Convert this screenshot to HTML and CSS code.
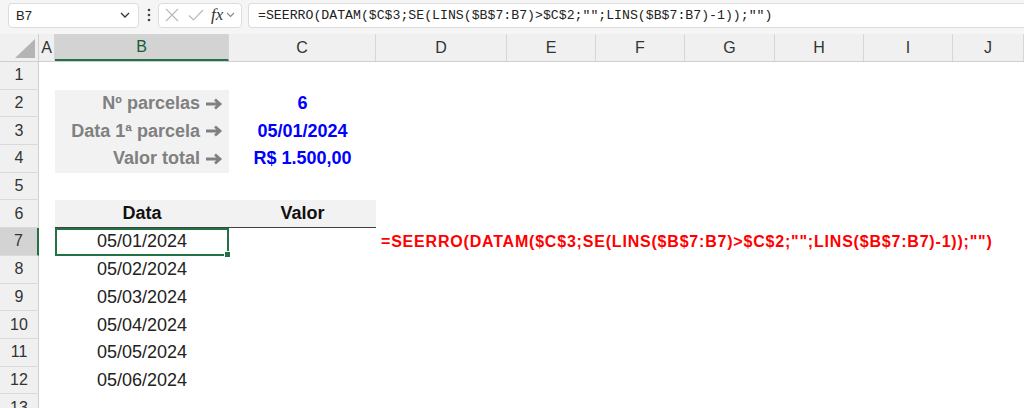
FILE: index.html
```html
<!DOCTYPE html>
<html lang="pt-BR">
  <head>
    <title>Parcelas com DATAM</title>
    <link rel="stylesheet" href="styles.css">
  </head>
  <body>
    <!-- Formula bar -->
    <div class="formula-bar">
      <div class="name-box">
        <span>B7</span>
        <svg class="chevron" width="10" height="6" viewBox="0 0 10 6"><path d="M1 1 L5 5 L9 1" fill="none" stroke="#333" stroke-width="1.3"/></svg>
      </div>
      <svg class="dots" width="4" height="14" viewBox="0 0 4 14"><circle cx="2" cy="2" r="1.3" fill="#444"/><circle cx="2" cy="7" r="1.3" fill="#444"/><circle cx="2" cy="12" r="1.3" fill="#444"/></svg>
      <div class="fx-box">
        <svg width="14" height="14" viewBox="0 0 14 14"><path d="M1 1 L13 13 M13 1 L1 13" stroke="#b8b8b8" stroke-width="1.1"/></svg>
        <svg width="16" height="14" viewBox="0 0 16 14"><path d="M1 7.5 L5.5 12 L15 2" fill="none" stroke="#b8b8b8" stroke-width="1.1"/></svg>
        <span class="fx">fx</span>
        <svg class="chevron" width="9" height="6" viewBox="0 0 9 6"><path d="M1 1 L4.5 4.5 L8 1" fill="none" stroke="#888" stroke-width="1.1"/></svg>
      </div>
      <div class="formula-input">=SEERRO(DATAM($C$3;SE(LINS($B$7:B7)&gt;$C$2;"";LINS($B$7:B7)-1));"")</div>
    </div>

    <!-- Sheet -->
    <div class="sheet">
      <div class="row head-row">
        <div class="corner">
          <svg width="20" height="19" viewBox="0 0 20 19"><path d="M20 0 L20 19 L0 19 Z" fill="#b4b4b4"/></svg>
        </div>
        <div class="col-head">A</div>
        <div class="col-head active">B</div>
        <div class="col-head">C</div>
        <div class="col-head">D</div>
        <div class="col-head">E</div>
        <div class="col-head">F</div>
        <div class="col-head">G</div>
        <div class="col-head">H</div>
        <div class="col-head">I</div>
        <div class="col-head">J</div>
      </div>

      <div class="row"><div class="row-head">1</div></div>
      <div class="row">
        <div class="row-head">2</div><div></div>
        <div class="cell label">Nº parcelas
          <svg class="arrow" width="18" height="12" viewBox="0 0 18 12"><path d="M1 6 H15 M10 1.5 L15 6 L10 10.5" fill="none" stroke="#808080" stroke-width="2.8"/></svg>
        </div>
        <div class="cell value">6</div>
      </div>
      <div class="row">
        <div class="row-head">3</div><div></div>
        <div class="cell label">Data 1ª parcela
          <svg class="arrow" width="18" height="12" viewBox="0 0 18 12"><path d="M1 6 H15 M10 1.5 L15 6 L10 10.5" fill="none" stroke="#808080" stroke-width="2.8"/></svg>
        </div>
        <div class="cell value">05/01/2024</div>
      </div>
      <div class="row">
        <div class="row-head">4</div><div></div>
        <div class="cell label">Valor total
          <svg class="arrow" width="18" height="12" viewBox="0 0 18 12"><path d="M1 6 H15 M10 1.5 L15 6 L10 10.5" fill="none" stroke="#808080" stroke-width="2.8"/></svg>
        </div>
        <div class="cell value">R$ 1.500,00</div>
      </div>
      <div class="row"><div class="row-head">5</div></div>
      <div class="row">
        <div class="row-head">6</div><div></div>
        <div class="cell table-head">Data</div>
        <div class="cell table-head">Valor</div>
      </div>
      <div class="row">
        <div class="row-head active">7</div><div></div>
        <div class="cell date selected">05/01/2024<span class="handle"></span></div>
        <div class="cell"></div>
        <div class="cell formula-note">=SEERRO(DATAM($C$3;SE(LINS($B$7:B7)&gt;$C$2;"";LINS($B$7:B7)-1));"")</div>
      </div>
      <div class="row">
        <div class="row-head">8</div><div></div>
        <div class="cell date">05/02/2024</div>
      </div>
      <div class="row">
        <div class="row-head">9</div><div></div>
        <div class="cell date">05/03/2024</div>
      </div>
      <div class="row">
        <div class="row-head">10</div><div></div>
        <div class="cell date">05/04/2024</div>
      </div>
      <div class="row">
        <div class="row-head">11</div><div></div>
        <div class="cell date">05/05/2024</div>
      </div>
      <div class="row">
        <div class="row-head">12</div><div></div>
        <div class="cell date">05/06/2024</div>
      </div>
      <div class="row"><div class="row-head">13</div></div>
    </div>
  </body>
</html>
```

FILE: styles.css
```css
body {
  margin: 0;
  background-color: white;
  font-family: "Liberation Sans", "DejaVu Sans", Arial, sans-serif;
  overflow: hidden;
}
.formula-bar {
  display: flex;
  align-items: center;
  height: 34px;
  padding: 0 0 4px 8px;
  box-sizing: border-box;
  background-color: #f5f5f5;
}
.name-box,
.fx-box,
.formula-input {
  display: flex;
  align-items: center;
  height: 25px;
  box-sizing: border-box;
  background-color: white;
  border: 1px solid #dcdcdc;
  border-radius: 4px;
}
.name-box {
  width: 131px;
  padding: 0 8px 0 7px;
  justify-content: space-between;
  font-size: 13px;
  color: #222;
}
.dots {
  margin: 0 7px 0 8px;
}
.fx-box {
  width: 84px;
  padding: 0 3px 0 6px;
  gap: 9px;
}
.fx {
  font-family: "Liberation Serif", serif;
  font-style: italic;
  font-size: 17px;
  color: #333;
  margin-left: -2px;
  margin-right: -6px;
}
.formula-input {
  flex: 1;
  margin-left: 6px;
  padding-left: 9px;
  border-right: none;
  border-radius: 4px 0 0 4px;
  font-family: "Liberation Mono", monospace;
  font-size: 13.2px;
  color: #222;
  white-space: nowrap;
}

.row {
  display: grid;
  grid-template-columns: 39px 16px 174px 147px 131px 89px 89px 90px 89px 89px 71px;
  height: 27.7px;
}
.head-row {
  height: 27px;
  background-color: #f0f0f0;
  border-bottom: 1px solid #cfcfcf;
}
.corner {
  display: flex;
  align-items: flex-end;
  justify-content: flex-end;
  padding: 0 3px 3px 0;
  border-right: 1px solid #cfcfcf;
}
.col-head {
  display: flex;
  align-items: center;
  justify-content: center;
  font-size: 16px;
  color: #333;
  border-right: 1px solid #d6d6d6;
}
.col-head.active {
  background-color: #d3d3d3;
  color: #185c37;
  border-bottom: 2px solid #217346;
}
.row-head {
  display: flex;
  align-items: center;
  justify-content: center;
  box-sizing: border-box;
  background-color: #f0f0f0;
  border-right: 1px solid #cfcfcf;
  border-bottom: 1px solid #dadada;
  font-size: 16px;
  color: #333;
}
.row-head.active {
  background-color: #d3d3d3;
  border-right: 2px solid #217346;
}
.cell {
  display: flex;
  align-items: center;
  white-space: nowrap;
  font-size: 18px;
  color: #222;
}
.label {
  justify-content: flex-end;
  gap: 5px;
  padding-right: 6px;
  background-color: #f2f2f2;
  font-weight: bold;
  color: #808080;
}
.value {
  justify-content: center;
  font-weight: bold;
  color: #0000ff;
}
.table-head {
  justify-content: center;
  background-color: #f2f2f2;
  border-bottom: 1px solid #404040;
  font-weight: bold;
  color: #111;
}
.date {
  justify-content: center;
}
.selected {
  position: relative;
  box-sizing: border-box;
  border: 2px solid #217346;
}
.handle {
  position: absolute;
  right: -4px;
  bottom: -4px;
  width: 5px;
  height: 5px;
  background-color: #217346;
  border: 1px solid white;
}
.formula-note {
  padding-left: 5px;
  font-size: 16px;
  letter-spacing: 0.8px;
  font-weight: bold;
  color: #ff0000;
}
```
